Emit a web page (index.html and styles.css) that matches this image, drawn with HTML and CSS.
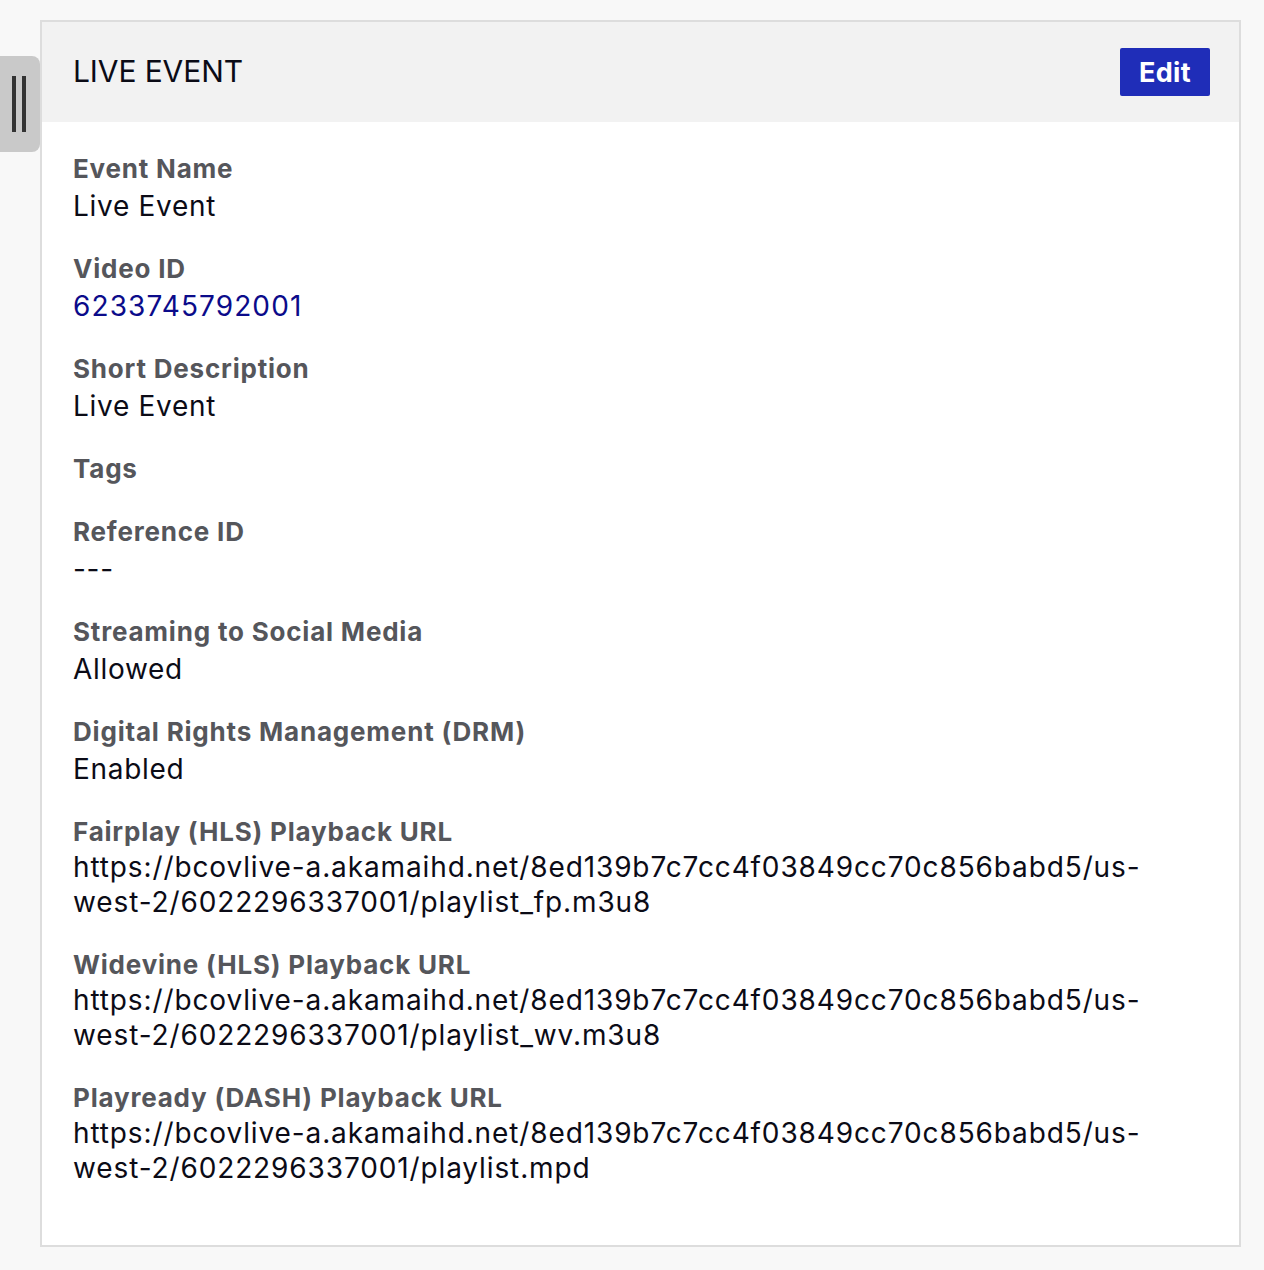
FILE: index.html
```html
<!DOCTYPE html>
<html lang="en">
<head>
<meta charset="utf-8">
<title>Live Event</title>
<link rel="stylesheet" href="styles.css">
</head>
<body>
<div class="page">
  <div class="handle"><span class="bar"></span><span class="bar"></span></div>
  <section class="card">
    <header class="card-header">
      <h1 class="title">LIVE EVENT</h1>
      <button class="edit-btn" type="button">Edit</button>
    </header>
    <div class="card-body">
      <div class="field"><div class="label">Event Name</div><div class="value">Live Event</div></div>
      <div class="field"><div class="label">Video ID</div><div class="value"><a class="link" href="#">6233745792001</a></div></div>
      <div class="field"><div class="label">Short Description</div><div class="value">Live Event</div></div>
      <div class="field"><div class="label">Tags</div><div class="value"></div></div>
      <div class="field"><div class="label">Reference ID</div><div class="value">---</div></div>
      <div class="field"><div class="label">Streaming to Social Media</div><div class="value">Allowed</div></div>
      <div class="field"><div class="label">Digital Rights Management (DRM)</div><div class="value">Enabled</div></div>
      <div class="field"><div class="label">Fairplay (HLS) Playback URL</div><div class="value url">https://bcovlive-a.akamaihd.net/8ed139b7c7cc4f03849cc70c856babd5/us-west-2/6022296337001/playlist_fp.m3u8</div></div>
      <div class="field"><div class="label">Widevine (HLS) Playback URL</div><div class="value url">https://bcovlive-a.akamaihd.net/8ed139b7c7cc4f03849cc70c856babd5/us-west-2/6022296337001/playlist_wv.m3u8</div></div>
      <div class="field"><div class="label">Playready (DASH) Playback URL</div><div class="value url">https://bcovlive-a.akamaihd.net/8ed139b7c7cc4f03849cc70c856babd5/us-west-2/6022296337001/playlist.mpd</div></div>
    </div>
  </section>
</div>
</body>
</html>
```

FILE: styles.css
```css
html, body {
  margin: 0;
  padding: 0;
  background: #f8f8f8;
}
body {
  font-family: "Inter", "Liberation Sans", sans-serif;
  color: #0b0b16;
}
.page {
  position: relative;
  padding: 20px 23px 22px 40px;
}
.handle {
  position: absolute;
  left: 0;
  top: 56px;
  width: 40px;
  height: 96px;
  background: #c9c9c9;
  border-radius: 0 8px 8px 0;
  display: flex;
  justify-content: center;
  gap: 6px;
  padding-top: 20px;
  box-sizing: border-box;
  padding-right: 2px;
}
.bar {
  width: 4px;
  height: 56px;
  background: #333333;
}
.card {
  border: 2px solid #dddddd;
  background: #ffffff;
  min-height: 1227px;
  box-sizing: border-box;
}
.card-header {
  background: #f2f2f2;
  height: 100px;
  display: flex;
  align-items: center;
  justify-content: space-between;
  padding: 0 29px 0 31px;
}
.title {
  margin: 0 0 2px 0;
  font-size: 30px;
  font-weight: 400;
  letter-spacing: -0.1px;
}
.edit-btn {
  font-family: inherit;
  background: #1f2db8;
  color: #ffffff;
  border: none;
  border-radius: 2px;
  width: 90px;
  height: 48px;
  font-size: 27px;
  font-weight: 700;
  letter-spacing: 0.3px;
  padding: 0;
}
.card-body {
  padding: 29px 40px 20px 31px;
}
.field {
  margin-bottom: 27px;
}
.label {
  font-size: 26px;
  font-weight: 700;
  color: #55565b;
  line-height: 36px;
  letter-spacing: 0.8px;
}
.value {
  font-size: 28px;
  line-height: 35.5px;
  margin-top: 1.5px;
  letter-spacing: 0.7px;
}
.value:empty {
  margin-top: 0;
}
.url {
  line-height: 35px;
  margin-top: 0;
  letter-spacing: 0.88px;
}
.link {
  color: #0b0b8a;
  text-decoration: none;
  letter-spacing: 1.1px;
}
```
